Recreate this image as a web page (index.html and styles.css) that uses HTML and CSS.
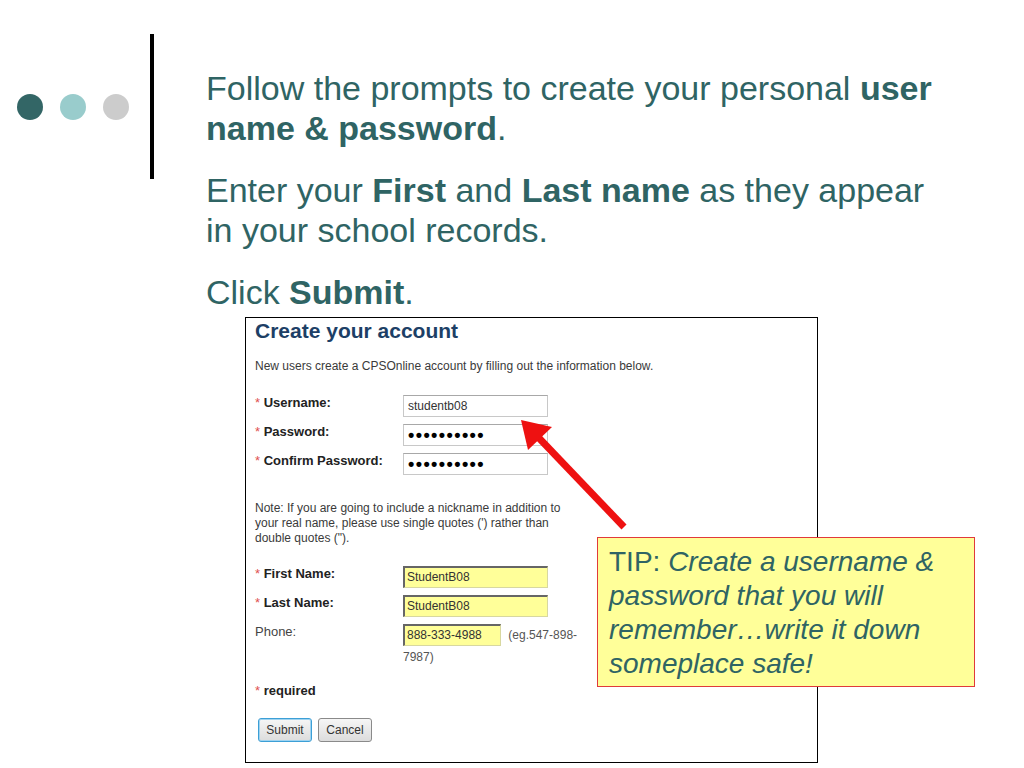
FILE: index.html
```html
<!DOCTYPE html>
<html lang="en">
<head>
  <meta charset="UTF-8" />
  <title>Create your account</title>
  <link rel="stylesheet" href="styles.css">
</head>
<body>
  <div class="slide">
    <div class="deco">
      <span class="dot dot-dark"></span>
      <span class="dot dot-light"></span>
      <span class="dot dot-gray"></span>
      <span class="bar"></span>
    </div>

    <div class="content">
      <p>Follow the prompts to create your personal <b>user name &amp; password</b>.</p>
      <p>Enter your <b>First</b> and <b>Last name</b> as they appear in your school records.</p>
      <p>Click <b>Submit</b>.</p>

      <!-- captura do formulario -->
      <div class="shot">
        <h2>Create your account</h2>
        <div class="intro">New users create a CPSOnline account by filling out the information below.</div>

        <div class="rows">
          <label class="req"><i>*</i> Username:</label>
          <div><span class="field">studentb08</span></div>
          <label class="req"><i>*</i> Password:</label>
          <div><span class="field dots">••••••••••</span></div>
          <label class="req"><i>*</i> Confirm Password:</label>
          <div><span class="field dots">••••••••••</span></div>
        </div>

        <div class="note">Note: If you are going to include a nickname in addition to your real name, please use single quotes (') rather than double quotes (").</div>

        <div class="rows rows-names">
          <label class="req"><i>*</i> First Name:</label>
          <div><span class="field yellow">StudentB08</span></div>
          <label class="req"><i>*</i> Last Name:</label>
          <div><span class="field yellow">StudentB08</span></div>
          <label>Phone:</label>
          <div class="phone"><span class="field yellow short">888-333-4988</span> (eg.547-898-7987)</div>
        </div>

        <div class="required"><i>*</i> required</div>

        <div class="buttons">
          <button class="btn btn-focus">Submit</button>
          <button class="btn">Cancel</button>
        </div>
      </div>
    </div>

    <svg class="arrow" width="1024" height="768" viewBox="0 0 1024 768">
      <line x1="624" y1="527" x2="538" y2="437" stroke="#ee1111" stroke-width="7" />
      <polygon points="521,420 552,427 528,450" fill="#ee1111" />
    </svg>

    <div class="tip">TIP: <em>Create a username &amp; password that you will remember…write it down someplace safe!</em></div>
  </div>
</body>
</html>
```

FILE: styles.css
```css
body {
  margin: 0;
  padding: 0;
  background: #ffffff;
  font-family: "Liberation Sans", Arial, sans-serif;
}

.slide {
  position: relative;
  width: 1024px;
  height: 768px;
  display: flex;
  overflow: hidden;
}

/* bolinhas + barra */
.deco {
  display: flex;
  align-items: center;
  height: 145px;
  margin-top: 34px;
  padding-left: 17px;
}

.dot {
  width: 26px;
  height: 26px;
  border-radius: 50%;
  margin-right: 17px;
}

.dot-dark { background: #336666; }
.dot-light { background: #99cccc; }
.dot-gray { background: #cccccc; margin-right: 21px; }

.bar {
  width: 4px;
  height: 145px;
  background: #000000;
  margin-right: 52px;
}

.content {
  padding-top: 68px;
  width: 740px;
}

.content p {
  margin: 0 0 22px 0;
  font-size: 34px;
  line-height: 40px;
  color: #2f6464;
}

.content p:nth-of-type(3) {
  margin-bottom: 5px;
}

/* formulario */
.shot {
  margin-left: 39px;
  width: 562px;
  height: 444px;
  border: 1px solid #000000;
  padding-left: 9px;
  font-family: "Liberation Sans", Arial, sans-serif;
  font-size: 12px;
  color: #333333;
}

.shot h2 {
  margin: 1px 0 0 0;
  font-size: 21px;
  line-height: 24px;
  color: #1d3f66;
}

.intro {
  margin-top: 15px;
  line-height: 16px;
  color: #3a3a3a;
}

.rows {
  display: grid;
  grid-template-columns: 148px 145px;
  row-gap: 7px;
  margin-top: 21px;
}

.rows label {
  font-size: 13px;
  line-height: 16px;
  color: #444444;
}

.rows label.req {
  font-weight: bold;
  color: #222222;
}

.shot i {
  font-style: normal;
  font-weight: normal;
  color: #e05050;
}

.field {
  display: block;
  box-sizing: border-box;
  height: 22px;
  border: 1px solid #c8c8c8;
  border-top-color: #a8a8a8;
  padding: 0 4px;
  line-height: 21px;
  font-size: 12px;
  color: #333333;
  background: #ffffff;
}

.dots {
  font-size: 18px;
  font-weight: bold;
  color: #000000;
  letter-spacing: 1.4px;
}

.yellow {
  background: #ffff99;
  border: 1px solid #d8d8a0;
  border-top: 2px solid #666666;
  border-left: 2px solid #666666;
  line-height: 19px;
  padding-left: 2px;
}

.note {
  width: 310px;
  margin-top: 26px;
  line-height: 15px;
  color: #3a3a3a;
}

.rows-names {
  margin-top: 20px;
}

.rows-names .phone {
  width: 178px;
  line-height: 22px;
  color: #555555;
}

.short {
  display: inline-block;
  width: 98px;
  vertical-align: top;
  margin-right: 4px;
  color: #333333;
}

.required {
  margin-top: 15px;
  font-size: 13px;
  font-weight: bold;
  color: #222222;
}

.buttons {
  margin-top: 20px;
  margin-left: 3px;
  display: flex;
  gap: 6px;
}

.btn {
  width: 54px;
  height: 24px;
  font-family: "Liberation Sans", Arial, sans-serif;
  font-size: 12px;
  color: #333333;
  background: linear-gradient(to bottom, #f6f6f6, #dcdcdc);
  border: 1px solid #8a8a8a;
  border-radius: 3px;
  padding: 0;
}

.btn-focus {
  border-color: #3c9fd6;
  box-shadow: inset 0 0 0 1px #9fd3f0;
}

/* seta vermelha */
.arrow {
  position: absolute;
  left: 0;
  top: 0;
  pointer-events: none;
}

/* caixa de dica */
.tip {
  position: absolute;
  left: 597px;
  top: 537px;
  width: 365px;
  height: 141px;
  padding: 7px 0 0 11px;
  background: #ffff99;
  border: 1px solid #e03a3a;
  font-size: 28px;
  line-height: 34px;
  color: #2f6464;
  z-index: 2;
}
```
